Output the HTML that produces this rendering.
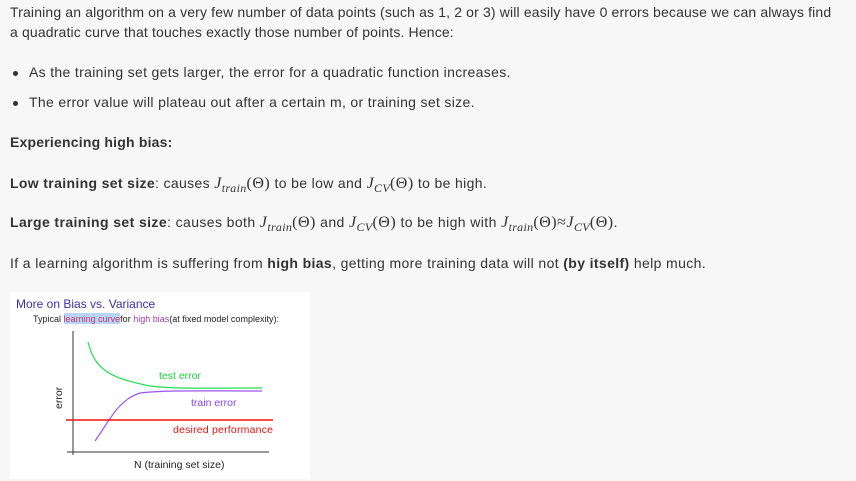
<!DOCTYPE html>
<html><head><meta charset="utf-8"><style>
body{margin:0;width:856px;height:481px;background:#f7f7f7;font-family:"Liberation Sans",sans-serif;font-size:14px;color:#333;position:relative;overflow:hidden}
.l{position:absolute;left:10px;white-space:nowrap;line-height:20px}
b{font-weight:bold}
.m{font-family:"Liberation Serif",serif;font-style:italic;font-size:16px}
.s{font-family:"Liberation Serif",serif;font-size:12px;font-style:italic;position:relative;top:4px;letter-spacing:0.3px}
.r{font-family:"Liberation Serif",serif;font-size:16px;letter-spacing:0.5px}
.dot{position:absolute;left:13px;width:5px;height:5px;border-radius:50%;background:#333}
</style></head><body>
<div class="l" style="top:2px;letter-spacing:0.15px">Training an algorithm on a very few number of data points (such as 1, 2 or 3) will easily have 0 errors because we can always find</div>
<div class="l" style="top:22px;letter-spacing:0.15px">a quadratic curve that touches exactly those number of points. Hence:</div>
<div class="dot" style="top:71px"></div>
<div class="l" style="left:29px;top:62px;letter-spacing:0.33px">As the training set gets larger, the error for a quadratic function increases.</div>
<div class="dot" style="top:101px"></div>
<div class="l" style="left:29px;top:92px;letter-spacing:0.33px">The error value will plateau out after a certain m, or training set size.</div>
<div class="l" style="top:132px;letter-spacing:0.2px"><b>Experiencing high bias:</b></div>
<div class="l" style="top:173px;letter-spacing:0.35px"><b>Low training set size</b>: causes <span class="m">J</span><span class="s">train</span><span class="r">(Θ)</span> to be low and <span class="m">J</span><span class="s">CV</span><span class="r">(Θ)</span> to be high.</div>
<div class="l" style="top:212px;letter-spacing:0.4px"><b>Large training set size</b>: causes both <span class="m">J</span><span class="s">train</span><span class="r">(Θ)</span> and <span class="m">J</span><span class="s">CV</span><span class="r">(Θ)</span> to be high with <span class="m">J</span><span class="s">train</span><span class="r">(Θ)≈</span><span class="m">J</span><span class="s">CV</span><span class="r">(Θ)</span>.</div>
<div class="l" style="top:253px;letter-spacing:0.37px">If a learning algorithm is suffering from <b>high bias</b>, getting more training data will not <b>(by itself)</b> help much.</div>
<svg style="position:absolute;left:0;top:0" width="856" height="481">
<rect x="10" y="292" width="300" height="187" fill="#fff"/>
<text x="16" y="308" font-family="Liberation Sans" font-size="12" fill="#3d2fa8">More on Bias vs. Variance</text>
<rect x="64" y="313" width="56" height="11" fill="#b9d5f5"/>
<text x="33" y="322" font-family="Liberation Sans" font-size="9" fill="#222" textLength="246">Typical <tspan fill="#c0396b">learning curve</tspan>for <tspan fill="#9b3fa8">high bias</tspan>(at fixed model complexity):</text>
<line x1="73" y1="331" x2="73" y2="455" stroke="#333"/>
<line x1="67" y1="452" x2="269" y2="452" stroke="#333"/>
<path d="M88 342 C95 370,110 378,150 386 C175 389,200 388,262 388" fill="none" stroke="#22dd55" stroke-width="1.2"/>
<path d="M95 441 C110 420,118 400,140 393 C165 390,200 391,262 391" fill="none" stroke="#9955ee" stroke-width="1.2"/>
<line x1="66" y1="420" x2="273" y2="420" stroke="#ee1111" stroke-width="1.6"/>
<text x="159" y="379" font-family="Liberation Sans" font-size="10.5" fill="#22cc44">test error</text>
<text x="191" y="406" font-family="Liberation Sans" font-size="10.5" fill="#8844ee">train error</text>
<text x="173" y="433" font-family="Liberation Sans" font-size="10.5" fill="#ee1111" textLength="100">desired performance</text>
<text x="134" y="468" font-family="Liberation Sans" font-size="10.5" fill="#222">N (training set size)</text>
<text transform="translate(62,409) rotate(-90)" font-family="Liberation Sans" font-size="10.5" fill="#222">error</text>
</svg>
</body></html>
